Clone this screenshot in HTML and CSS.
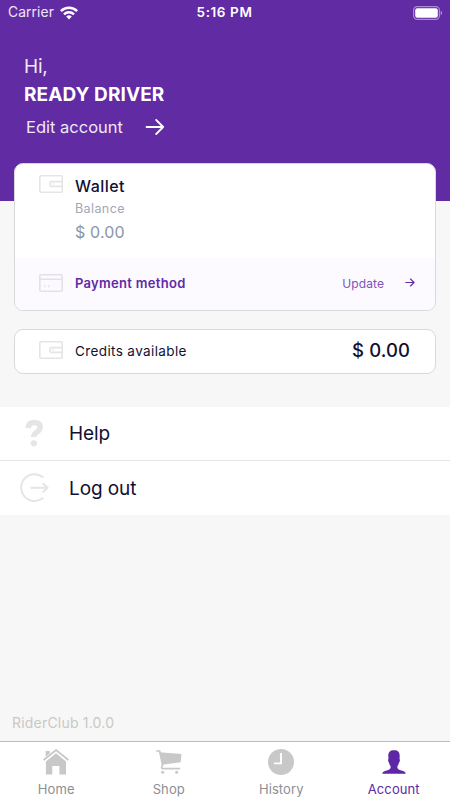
FILE: index.html
```html
<!DOCTYPE html>
<html lang="en">
<head>
<meta charset="utf-8">
<title>RiderClub</title>
<link rel="stylesheet" href="styles.css">
</head>
<body>
<div class="app">
  <header class="hero">
    <div class="status">
      <div class="carrier"><span>Carrier</span>
        <svg class="wifi" width="18" height="14" viewBox="0 0 18 14" fill="none" stroke="#fff" stroke-width="2.5"><path d="M.9 5.2a11.5 11.5 0 0 1 16.2 0M4 8.3a7.1 7.1 0 0 1 10 0"/><path d="M9 13.4 6.2 10.5a4 4 0 0 1 5.6 0z" fill="#fff" stroke="none"/></svg>
      </div>
      <span class="time">5:16 PM</span>
      <svg class="battery" width="30" height="14" viewBox="0 0 30 14"><rect x=".6" y=".6" width="25.8" height="12.8" rx="3.6" fill="none" stroke="#a98bcf" stroke-width="1.2"/><rect x="2.2" y="2.2" width="22.6" height="9.6" rx="2" fill="#fff"/><path d="M27.6 4.8c2 .7 2 3.7 0 4.4z" fill="#a98bcf"/></svg>
    </div>
    <p class="hi">Hi,</p>
    <h1 class="name">READY DRIVER</h1>
    <a class="edit"><span>Edit account</span>
      <svg width="20" height="16" viewBox="0 0 20 16" fill="none" stroke="#fff" stroke-width="1.8" stroke-linecap="round" stroke-linejoin="round"><path d="M1.5 8h16.7M11.2 1l7 7-7 7"/></svg>
    </a>
  </header>

  <main class="content">
    <section class="card">
      <div class="wallet">
        <svg class="icon" width="24" height="18" viewBox="0 0 24 18" fill="none" stroke="#e5e5e8" stroke-width="1.6"><rect x=".8" y=".8" width="22.4" height="16.4" rx="1"/><path d="M23.3 6.6H12.2a1.2 1.2 0 0 0-1.2 1.2v2.4a1.2 1.2 0 0 0 1.2 1.2h11.1M14 8.2v1.4"/></svg>
        <div>
          <h2 class="wallet-title">Wallet</h2>
          <p class="balance">Balance</p>
          <p class="amount">$ 0.00</p>
        </div>
      </div>
      <div class="payment">
        <svg class="icon" width="24" height="18" viewBox="0 0 24 18" fill="none" stroke="#e3e1e8" stroke-width="1.6"><rect x=".8" y=".8" width="22.4" height="16.4" rx="1"/><path d="M.7 5.3h22.6M5 12.4h1.4M9 12.4h1.4"/></svg>
        <span class="payment-label">Payment method</span>
        <span class="update">Update</span>
        <svg class="small-arrow" width="10" height="9" viewBox="0 0 10 9" fill="none" stroke="#5f2ba6" stroke-width="1.1" stroke-linecap="round" stroke-linejoin="round"><path d="M.8 4.5h8.3M5.5 1l3.6 3.5L5.5 8"/></svg>
      </div>
    </section>

    <section class="card credits">
      <svg class="icon" width="24" height="18" viewBox="0 0 24 18" fill="none" stroke="#e5e5e8" stroke-width="1.6"><rect x=".8" y=".8" width="22.4" height="16.4" rx="1"/><path d="M23.3 6.6H12.2a1.2 1.2 0 0 0-1.2 1.2v2.4a1.2 1.2 0 0 0 1.2 1.2h11.1M14 8.2v1.4"/></svg>
      <span class="credits-label">Credits available</span>
      <span class="credits-value">$ 0.00</span>
    </section>

    <nav class="menu">
      <a class="item">
        <svg width="30" height="30" viewBox="0 0 30 30"><path d="M8.1 9C8.3 5 10.6 3.5 14.1 3.5c3.9 0 6.1 1.7 6.1 4.7 0 5-6.6 4.6-6.6 9.8" fill="none" stroke="#e5e5e8" stroke-width="5.4"/><circle cx="13.8" cy="24.3" r="3.1" fill="#e5e5e8"/></svg>
        <span>Help</span>
      </a>
      <a class="item">
        <svg width="30" height="30" viewBox="0 0 30 30" fill="none" stroke="#e5e5e8" stroke-width="2" stroke-linecap="round" stroke-linejoin="round"><path d="M22.6 3.9a13.4 13.4 0 1 0 0 21.4M11.3 14.7h16.2M23.3 10.7l4.3 4-4.3 4"/></svg>
        <span>Log out</span>
      </a>
    </nav>
    <p class="version">RiderClub 1.0.0</p>
  </main>

  <footer class="tabs">
    <a class="tab">
      <svg width="26" height="26" viewBox="0 0 26 26" fill="#c8c8c8"><path d="M2.9 12.6 13 4.2l10 8.4v13h-6.6V17H9.3v8.6H2.9z"/><path d="M2.8 7.4V2h3.7v2.4z"/><path d="M.8 11.2 13 1.2l12.2 10" fill="none" stroke="#fff" stroke-width="3.6"/><path d="M2.8 7.6V2h3.7v2.6z"/><path d="M.6 10.9 13 1.1l12.4 9.8" fill="none" stroke="#c8c8c8" stroke-width="1.9"/></svg>
      <span>Home</span>
    </a>
    <a class="tab">
      <svg width="26" height="26" viewBox="0 0 26 26" fill="#c8c8c8"><path d="M3.6 3.2 25.5 5l-.8 8.3L6.3 15.7z"/><path d="M.2 2H3.6l3 14.4c-1.5 1.5-1.2 3.2 0 3.2h17.6" fill="none" stroke="#c8c8c8" stroke-width="1.7"/><circle cx="6.7" cy="23.2" r="1.5"/><circle cx="20.6" cy="23.2" r="1.5"/></svg>
      <span>Shop</span>
    </a>
    <a class="tab">
      <svg width="26" height="26" viewBox="0 0 26 26"><circle cx="13" cy="13" r="13" fill="#c8c8c8"/><path d="M13 4v10.4H6" fill="none" stroke="#fff" stroke-width="1.9"/></svg>
      <span>History</span>
    </a>
    <a class="tab active">
      <svg width="26" height="26" viewBox="0 0 26 26" fill="#5d27a5"><path d="M1.3 24.8c.2-2.4 2.6-2.9 5.2-3.6 2.4-.6 3.4-1.6 3.1-4-.9-1-1.3-2-1.6-3.6-1.1-.9-1-3.2-.5-4C6.8 4 8 1.3 13 1.3S19.2 4 18.5 9.6c.5.8.6 3.1-.5 4-.3 1.6-.7 2.6-1.6 3.6-.3 2.4.7 3.4 3.1 4 2.6.7 5 1.2 5.2 3.6z"/></svg>
      <span>Account</span>
    </a>
  </footer>
</div>
</body>
</html>
```
FILE: styles.css
```css
* { box-sizing: border-box; }
body, p, h1, h2 { margin: 0; }
body { font-family: Inter, "Liberation Sans", sans-serif; background: #f7f7f7; }
svg { display: block; flex: none; }
.app { width: 450px; height: 800px; display: flex; flex-direction: column; overflow: hidden; }

.hero { height: 201px; flex: none; background: #612ba4; color: #fff; }
.status { height: 24px; padding: 0 7px 0 8px; display: grid; grid-template-columns: 1fr auto 1fr; align-items: center; font-size: 14px; line-height: 25px; }
.carrier { display: flex; gap: 6px; align-items: center; color: #efe8f6; font-size: 13.8px; letter-spacing: .1px; }
.time { font-size: 13.5px; font-weight: 600; letter-spacing: .6px; margin-left: -2px; }
.battery { justify-self: end; }
.hi { margin: 31px 0 0 24px; font-size: 19px; line-height: 24px; color: #efe8f6; letter-spacing: -.2px; }
.name { margin: 4px 0 0 24px; font-size: 19px; line-height: 24px; font-weight: 700; letter-spacing: .1px; }
.edit { margin: 8px 0 0 26px; display: flex; align-items: center; gap: 22px; font-size: 16.5px; line-height: 24px; color: #efe8f6; }

.content { flex: 1; display: flex; flex-direction: column; }
.card { flex: none; margin: 0 14px; border: 1px solid #d9d9dc; border-radius: 9px; background: #fff; overflow: hidden; }
.card:first-child { margin-top: -38px; height: 148px; }
.wallet { height: 94px; padding: 11px 24px 0; display: flex; gap: 12px; }
.wallet-title { font-size: 16px; line-height: 22px; font-weight: 500; letter-spacing: .45px; color: #111032; }
.balance { margin-top: 2px; font-size: 12.5px; line-height: 20px; letter-spacing: .4px; color: #9fa7b8; }
.amount { margin-top: 1px; font-size: 16px; line-height: 24px; letter-spacing: .15px; color: #8b94aa; }
.payment { height: 53px; padding: 0 20px 4px 24px; display: flex; align-items: center; background: #fcfaff; color: #5f2ba6; font-size: 13px; }
.payment-label { margin-left: 12px; font-weight: 600; letter-spacing: .3px; padding-top: 1px; }
.update { margin-left: auto; font-size: 12px; color: #7d55b6; letter-spacing: .1px; padding-top: 2px; }
.small-arrow { margin-left: 21px; }
.credits { margin-top: 18px; height: 45px; padding: 0 25px 3px 24px; display: flex; align-items: center; color: #111032; }
.credits-label { margin-left: 12px; font-size: 13.5px; letter-spacing: .38px; padding-top: 2px; }
.credits-value { margin-left: auto; font-size: 18.5px; font-weight: 500; letter-spacing: .1px; }

.menu { margin-top: 33px; background: #fff; flex: none; }
.item { display: flex; align-items: center; height: 54px; padding-left: 20px; gap: 19px; font-size: 19px; letter-spacing: -.1px; color: #111032; }
.item:first-child { border-bottom: 1px solid #e5e5e7; }
.version { margin: auto 0 8px 12px; font-size: 14px; line-height: 20px; color: #c9c9c3; letter-spacing: .2px; }

.tabs { flex: none; height: 59px; border-top: 1px solid #bcbcbe; background: #fff; display: grid; grid-template-columns: repeat(4, 1fr); }
.tab { display: flex; flex-direction: column; align-items: center; padding-top: 7px; gap: 5px; font-size: 13px; line-height: 18px; letter-spacing: .1px; color: #8e8e93; }
.active { color: #5d27a5; }
```
